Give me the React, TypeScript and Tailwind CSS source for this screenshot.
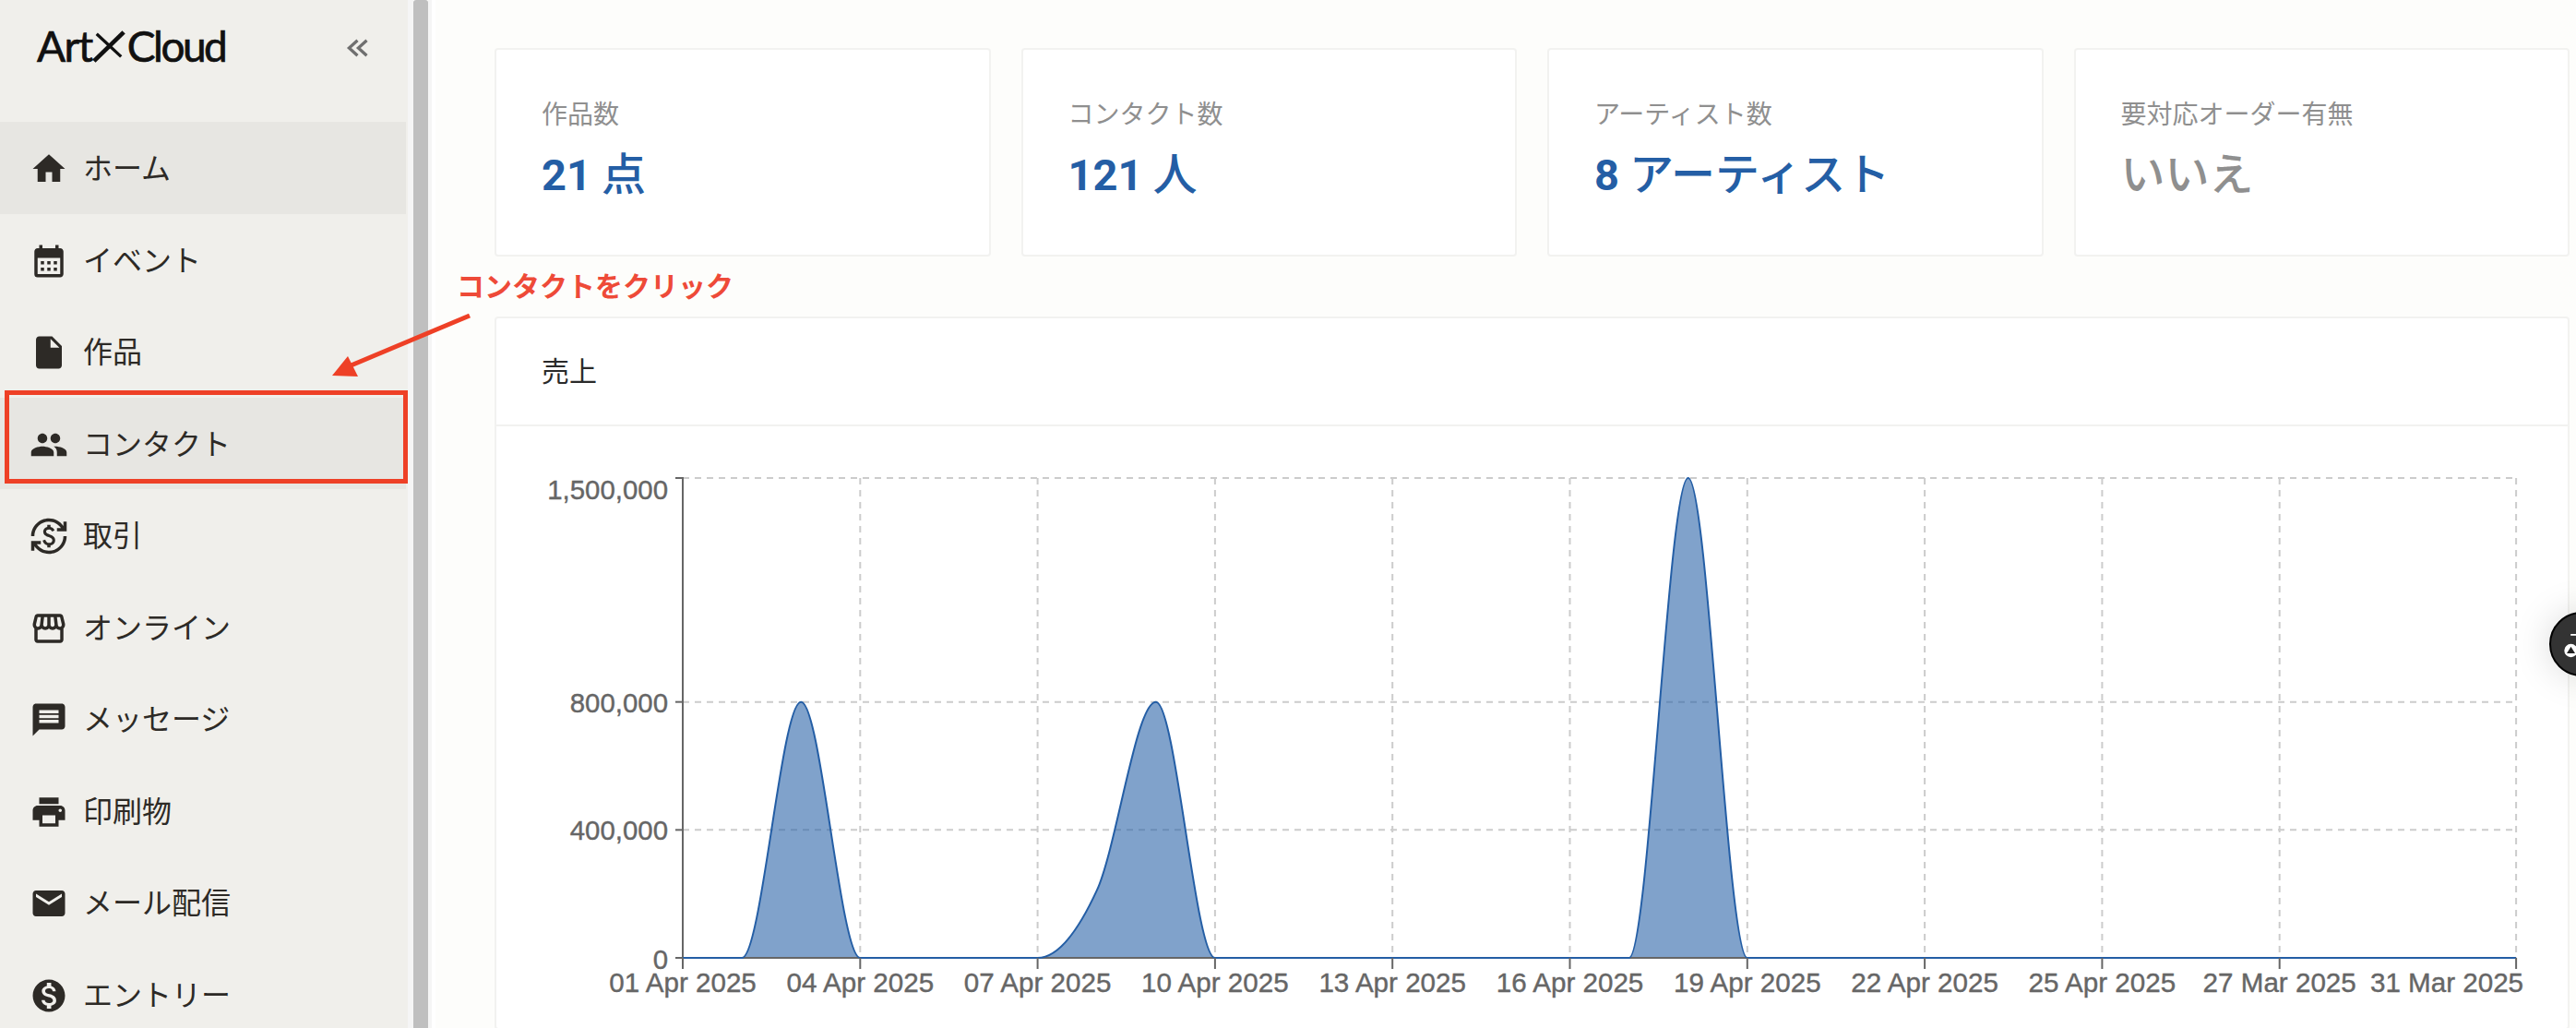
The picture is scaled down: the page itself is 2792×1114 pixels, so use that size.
import type { ComponentType } from "react";
import {
  MdCalendarMonth,
  MdCurrencyExchange,
  MdEmail,
  MdHome,
  MdInsertDriveFile,
  MdMessage,
  MdMonetizationOn,
  MdOutlineStorefront,
  MdPeople,
  MdPrint,
} from "react-icons/md";

const fontStack = "font-['Liberation_Sans','Noto_Sans_CJK_JP',sans-serif]";

const navItems: { label: string; icon: ComponentType<{ className?: string }>; active?: boolean }[] = [
  { label: "ホーム", icon: MdHome, active: true },
  { label: "イベント", icon: MdCalendarMonth },
  { label: "作品", icon: MdInsertDriveFile },
  { label: "コンタクト", icon: MdPeople, active: true },
  { label: "取引", icon: MdCurrencyExchange },
  { label: "オンライン", icon: MdOutlineStorefront },
  { label: "メッセージ", icon: MdMessage },
  { label: "印刷物", icon: MdPrint },
  { label: "メール配信", icon: MdEmail },
  { label: "エントリー", icon: MdMonetizationOn },
];

const stats = [
  { label: "作品数", count: "21", unit: "点", muted: false },
  { label: "コンタクト数", count: "121", unit: "人", muted: false },
  { label: "アーティスト数", count: "8", unit: "アーティスト", muted: false },
  { label: "要対応オーダー有無", count: "", unit: "いいえ", muted: true },
];

// chart geometry, in page pixels
const X0 = 740;
const DAY = 64.1;
const Y0 = 1038;
const YTOP = 518;
const MAX = 1500000;
const xAt = (day: number) => X0 + day * DAY;
const yAt = (v: number) => Y0 - (v / MAX) * (Y0 - YTOP);

const sales: Record<number, number> = { 2: 800000, 7: 210000, 8: 800000, 17: 1500000 };
const points = Array.from({ length: 32 }, (_, d) => [xAt(d), yAt(sales[d] ?? 0)]);

// same curve as d3's curveMonotoneX
function monotonePath(pts: number[][]) {
  const h = DAY;
  const slopes = pts.map((p, i) => {
    if (i === 0 || i === pts.length - 1) return 0;
    const s0 = (p[1] - pts[i - 1][1]) / h;
    const s1 = (pts[i + 1][1] - p[1]) / h;
    const m = (s0 + s1) / 2;
    return (Math.sign(s0) + Math.sign(s1)) * Math.min(Math.abs(s0), Math.abs(s1), 0.5 * Math.abs(m)) || 0;
  });
  let d = `M${pts[0][0]},${pts[0][1]}`;
  for (let i = 1; i < pts.length; i++) {
    const dx = h / 3;
    d += `C${pts[i - 1][0] + dx},${pts[i - 1][1] + dx * slopes[i - 1]} ${pts[i][0] - dx},${pts[i][1] - dx * slopes[i]} ${pts[i][0]},${pts[i][1]}`;
  }
  return d;
}

const linePath = monotonePath(points);
const areaPath = `${linePath}L${xAt(31)},${Y0}L${X0},${Y0}Z`;

const xTicks = [
  { day: 0, label: "01 Apr 2025" },
  { day: 3, label: "04 Apr 2025" },
  { day: 6, label: "07 Apr 2025" },
  { day: 9, label: "10 Apr 2025" },
  { day: 12, label: "13 Apr 2025" },
  { day: 15, label: "16 Apr 2025" },
  { day: 18, label: "19 Apr 2025" },
  { day: 21, label: "22 Apr 2025" },
  { day: 24, label: "25 Apr 2025" },
  { day: 27, label: "27 Mar 2025" },
  { day: 31, label: "31 Mar 2025" },
];
const yTicks = [
  { value: 1500000, label: "1,500,000", dy: 23 },
  { value: 800000, label: "800,000", dy: 11 },
  { value: 400000, label: "400,000", dy: 11 },
  { value: 0, label: "0", dy: 12 },
];

function SalesChart() {
  const lastX = xAt(31);
  return (
    <svg viewBox="538 462 2245 652" className="block h-[652px] w-full">
      {xTicks.slice(1).map((t) => (
        <line key={t.day} x1={xAt(t.day)} x2={xAt(t.day)} y1={YTOP} y2={Y0} stroke="#cccccc" strokeWidth="2" strokeDasharray="7 6" />
      ))}
      {yTicks.slice(0, 3).map((t) => (
        <line key={t.value} x1={X0} x2={lastX} y1={yAt(t.value)} y2={yAt(t.value)} stroke="#cccccc" strokeWidth="2" strokeDasharray="7 6" />
      ))}
      <path d={areaPath} fill="#245ea5" fillOpacity="0.58" />
      <line x1={X0} x2={X0} y1={YTOP - 1} y2={Y0} stroke="#666666" strokeWidth="2" />
      <line x1={X0} x2={lastX} y1={Y0} y2={Y0} stroke="#666666" strokeWidth="2" />
      <path d={linePath} fill="none" stroke="#245ea5" strokeWidth="2" />
      {yTicks.map((t) => (
        <g key={t.value}>
          <line x1={X0 - 8} x2={X0} y1={yAt(t.value)} y2={yAt(t.value)} stroke="#666666" strokeWidth="2" />
          <text x={724} y={yAt(t.value) + t.dy} textAnchor="end" fontSize="29.4" fill="#666666" stroke="#666666" strokeWidth="0.4">
            {t.label}
          </text>
        </g>
      ))}
      {xTicks.map((t) => (
        <g key={t.day}>
          <line x1={xAt(t.day)} x2={xAt(t.day)} y1={Y0} y2={Y0 + 12} stroke="#666666" strokeWidth="2" />
          {/* the last label would run past the plot, so it ends at the tick */}
          <text
            x={t.day === 31 ? lastX + 8 : xAt(t.day)}
            y={1075}
            textAnchor={t.day === 31 ? "end" : "middle"}
            fontSize="29.6"
            fill="#666666"
            stroke="#666666"
            strokeWidth="0.4"
          >
            {t.label}
          </text>
        </g>
      ))}
    </svg>
  );
}

function Logo() {
  return (
    <div className="flex items-center font-['Lato',sans-serif] text-[46px] leading-none text-[#111111] [-webkit-text-stroke:0.7px_#111111]">
      <span className="tracking-[-1.5px]">Art</span>
      <svg viewBox="0 0 38 38" className="h-[36px] w-[36px]" fill="none" stroke="#111111">
        <path d="M2 36L36 3" strokeWidth="5" />
        <path d="M5 5L33 31" strokeWidth="3.5" />
      </svg>
      <span className="ml-[2px] tracking-[-2.5px]">Cloud</span>
    </div>
  );
}

function Sidebar() {
  return (
    <aside className="h-full w-[442px] shrink-0 bg-[#f0efeb]">
      <div className="flex h-[132px] items-start justify-between pl-[40px] pr-[41px] pt-[27px]">
        <Logo />
        <svg viewBox="0 0 26 22" className="mt-[15px] h-[20px] w-[27px]" fill="none" stroke="#6f6f6f" strokeWidth="3.6">
          <path d="M13 2L3 11L13 20M24 2L14 11L24 20" />
        </svg>
      </div>
      <nav>
        {navItems.map((item) => (
          <div
            key={item.label}
            className={`flex h-[99.5px] items-center gap-[16px] pl-[32px] pt-[3px] text-[32px] leading-none text-[#2d2a26] ${item.active ? "w-[440px] bg-[#e7e6e2]" : ""}`}
          >
            <item.icon className="h-[42px] w-[42px] shrink-0 text-[#2d2a26]" />
            <span>{item.label}</span>
          </div>
        ))}
      </nav>
    </aside>
  );
}

function StatCard({ label, count, unit, muted }: { label: string; count: string; unit: string; muted: boolean }) {
  return (
    <div className="h-[226px] rounded-[4px] border-2 border-[#f2f2f0] bg-white pl-[49px] pt-[53px]">
      <p className="text-[28px] leading-[36px] text-[#8f8f8f]">{label}</p>
      <p className={`mt-[17px] text-[48px] font-medium leading-[60px] ${muted ? "text-[#8f8f8f]" : "text-[#245ea5]"}`}>
        {count && <span className="mr-[11px] font-['Roboto',sans-serif] text-[47px] font-bold">{count}</span>}
        {unit}
      </p>
    </div>
  );
}

export default function App() {
  return (
    <div className={`relative flex h-[1114px] w-[2792px] overflow-hidden bg-[#fdfdfb] ${fontStack}`}>
      <Sidebar />
      {/* window resize handle */}
      <div className="flex h-full w-[30px] shrink-0">
        <div className="w-[6px] bg-[#f5f5f5]" />
        <div className="w-[16px] rounded-t-[3px] bg-[#bfbfbf]" />
        <div className="w-[4px] bg-[#f5f5f5]" />
        <div className="w-[4px] bg-white" />
      </div>
      <main className="min-w-0 flex-1 pl-[64px] pr-[7px] pt-[52px]">
        <div className="grid grid-cols-4 gap-[33px]">
          {stats.map((s) => (
            <StatCard key={s.label} {...s} />
          ))}
        </div>
        <section className="mt-[65px] rounded-[4px] border-2 border-[#f2f2f0] bg-white">
          <h2 className="flex h-[117px] items-center border-b-2 border-[#f2f2f0] pl-[49px] text-[30px] font-normal text-[#2a2a2a]">売上</h2>
          <SalesChart />
        </section>
      </main>

      {/* annotation drawn on the screenshot */}
      <div className="absolute left-[5px] top-[423px] h-[101px] w-[437px] border-[5px] border-[#ee4026]" />
      <p className="absolute left-[495px] top-[293px] text-[30px] font-bold leading-[36px] text-[#ee4a38]">コンタクトをクリック</p>
      <svg className="absolute left-[355px] top-[335px] h-[80px] w-[160px]" viewBox="355 335 160 80">
        <line x1="509" y1="342" x2="378" y2="397" stroke="#ee4026" strokeWidth="5" />
        <polygon points="360,407 377,386 388,408" fill="#ee4026" />
      </svg>

      {/* floating help button */}
      <div className="absolute left-[2763px] top-[663px] flex h-[70px] w-[70px] rounded-full border-2 border-black bg-[#333333] shadow-[0_0_40px_rgba(0,0,0,0.15)]">
        <svg viewBox="0 0 30 50" className="ml-[14px] mt-[22px] h-[30px] w-[18px]">
          <rect x="12" y="0" width="10" height="3" fill="#ffffff" />
          <circle cx="12.5" cy="30" r="12" fill="#ffffff" />
          <polygon points="12.5,23 20,35 5,35" fill="#222222" />
        </svg>
      </div>
    </div>
  );
}
